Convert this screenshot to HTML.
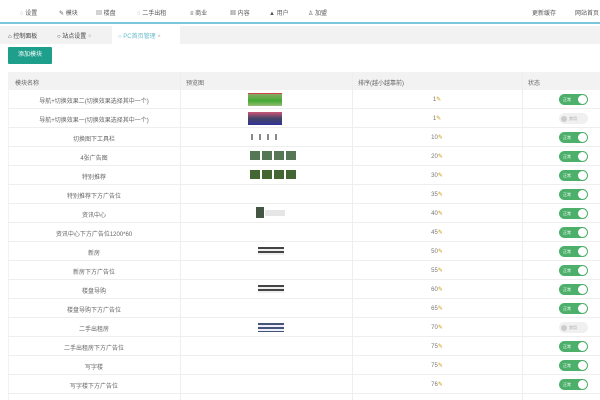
<!DOCTYPE html>
<html><head><meta charset="utf-8"><style>
*{margin:0;padding:0;box-sizing:border-box}
body{width:600px;height:400px;overflow:hidden;background:#fff;font-family:"Liberation Sans","Noto Sans CJK SC",sans-serif;font-size:6px;color:#666;position:relative}
.nav{position:absolute;left:0;top:0;width:600px;height:24px;border-bottom:2px solid #7cc6dc;background:#fff}
.nav span{position:absolute;top:8px;font-size:6px;color:#555}
.tabs{position:absolute;top:26px;left:0;width:600px;height:18px;background:#f2f2f2}
.tabs span{position:absolute;top:5px;font-size:6px;color:#444}
.tab3{position:absolute;left:112px;top:0;width:68px;height:18px;background:#fff}
.btn{position:absolute;left:8px;top:47px;width:44px;height:17px;background:#1e9f8c;color:#fff;font-size:6px;text-align:center;line-height:17px;border-radius:1px}
.th{position:absolute;left:8px;top:72px;width:592px;height:18px;background:#f2f2f2}
.th span{position:absolute;top:6px;color:#666}
.row{position:absolute;left:8px;width:592px;height:19px;border-bottom:1px solid #eee}
.row .n{position:absolute;left:0;width:172px;text-align:center;top:6px}
.row .s{position:absolute;left:344px;width:170px;text-align:center;top:6px;color:#777}
.s i{color:#c90;font-style:normal}
.vl{position:absolute;top:72px;height:328px;width:1px;background:#eee}
.tg{position:absolute;left:551px;top:4px;width:29px;height:11px;border-radius:6px;background:#4caf6a;color:#fff;font-size:4px;line-height:11px;padding-left:4px}
.tg:after{content:"";position:absolute;right:1px;top:1px;width:9px;height:9px;border-radius:50%;background:#fff}
.off{background:#f0f0f0;color:#aaa;padding-left:10px}
.off:after{left:2px;right:auto;width:6px;height:6px;top:2.5px;background:#ccc}
.img{position:absolute;left:240px;top:3px;height:13px}
</style></head><body>
<div class="nav">
<span style="left:20px">◌ 设置</span><span style="left:59px">✎ 模块</span><span style="left:96px">▤ 楼盘</span><span style="left:137px">◌ 二手出租</span><span style="left:190px">≡ 商业</span><span style="left:230px">▦ 内容</span><span style="left:269px">▲ 用户</span><span style="left:308px">♙ 加盟</span><span style="left:532px">更新缓存</span><span style="left:575px">网站首页</span>
</div>
<div class="tabs"><div class="tab3"></div>
<span style="left:8px">⌂ 控制面板</span><span style="left:57px">○ 站点设置 <b style="color:#bbb;font-weight:normal">×</b></span><span style="left:118px;color:#6bc">○ PC首页管理 <b style="color:#bbb;font-weight:normal">×</b></span></div>
<div class="btn">添加模块</div>
<div class="th"><span style="left:7px">模块名称</span><span style="left:178px">预览图</span><span style="left:350px">排序(越小越靠前)</span><span style="left:520px">状态</span></div>
<div class="vl" style="left:180px"></div><div class="vl" style="left:352px"></div><div class="vl" style="left:522px"></div>
<div class="vl" style="left:8px;background:#f2f2f2"></div>
<div class="row" style="top:90px"><div class="n">导航+切换效果二(切换效果选择其中一个)</div><div class="img" style="left:240px;width:34px;background:linear-gradient(#c44 0 1px,#8a6 1px,#4a3 60%,#9b7)"></div><div class="s">1<i>✎</i></div><div class="tg">正常</div></div>
<div class="row" style="top:109px"><div class="n">导航+切换效果一(切换效果选择其中一个)</div><div class="img" style="left:240px;width:34px;background:linear-gradient(#c57,#446 50%,#339)"></div><div class="s">1<i>✎</i></div><div class="tg off">禁用</div></div>
<div class="row" style="top:128px"><div class="n">切换图下工具栏</div><div class="img" style="left:243px;width:30px;top:6px;height:6px;background:repeating-linear-gradient(90deg,#888 0 2px,#fff 2px 8px)"></div><div class="s">10<i>✎</i></div><div class="tg">正常</div></div>
<div class="row" style="top:147px"><div class="n">4张广告图</div><div class="img" style="left:242px;width:46px;top:4px;height:9px;background:repeating-linear-gradient(90deg,#575 0 10px,#fff 10px 12px)"></div><div class="s">20<i>✎</i></div><div class="tg">正常</div></div>
<div class="row" style="top:166px"><div class="n">特别推荐</div><div class="img" style="left:242px;width:46px;top:4px;height:9px;background:repeating-linear-gradient(90deg,#463 0 10px,#fff 10px 12px)"></div><div class="s">30<i>✎</i></div><div class="tg">正常</div></div>
<div class="row" style="top:185px"><div class="n">特别推荐下方广告位</div><div class="s">35<i>✎</i></div><div class="tg">正常</div></div>
<div class="row" style="top:204px"><div class="n">资讯中心</div><div class="img" style="left:248px;width:8px;height:11px;background:#454"></div><div class="img" style="left:257px;width:20px;top:6px;height:6px;background:#e6e6e6"></div><div class="s">40<i>✎</i></div><div class="tg">正常</div></div>
<div class="row" style="top:223px"><div class="n">资讯中心下方广告位1200*60</div><div class="s">45<i>✎</i></div><div class="tg">正常</div></div>
<div class="row" style="top:242px"><div class="n">新房</div><div class="img" style="left:250px;width:26px;top:5px;height:8px;background:repeating-linear-gradient(#444 0 2px,#eee 2px 4px)"></div><div class="s">50<i>✎</i></div><div class="tg">正常</div></div>
<div class="row" style="top:261px"><div class="n">新房下方广告位</div><div class="s">55<i>✎</i></div><div class="tg">正常</div></div>
<div class="row" style="top:280px"><div class="n">楼盘导购</div><div class="img" style="left:250px;width:26px;top:5px;height:8px;background:repeating-linear-gradient(#444 0 2px,#eee 2px 4px)"></div><div class="s">60<i>✎</i></div><div class="tg">正常</div></div>
<div class="row" style="top:299px"><div class="n">楼盘导购下方广告位</div><div class="s">65<i>✎</i></div><div class="tg">正常</div></div>
<div class="row" style="top:318px"><div class="n">二手出租房</div><div class="img" style="left:250px;width:26px;top:5px;height:9px;background:repeating-linear-gradient(#457 0 2px,#eef 2px 4px)"></div><div class="s">70<i>✎</i></div><div class="tg off">禁用</div></div>
<div class="row" style="top:337px"><div class="n">二手出租房下方广告位</div><div class="s">75<i>✎</i></div><div class="tg">正常</div></div>
<div class="row" style="top:356px"><div class="n">写字楼</div><div class="s">75<i>✎</i></div><div class="tg">正常</div></div>
<div class="row" style="top:375px"><div class="n">写字楼下方广告位</div><div class="s">76<i>✎</i></div><div class="tg">正常</div></div>
</body></html>
